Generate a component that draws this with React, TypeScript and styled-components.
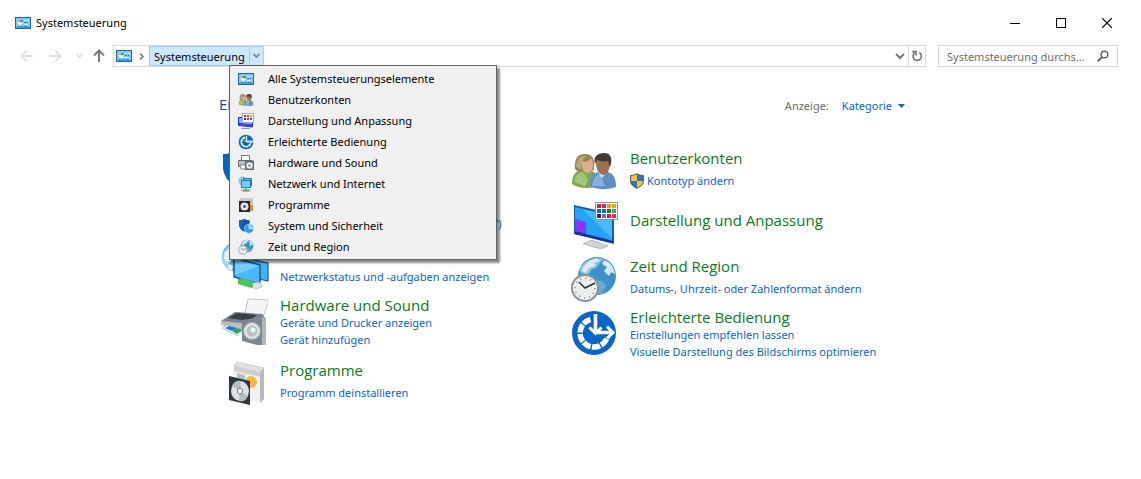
import React from "react";
import styled, { createGlobalStyle } from "styled-components";

const Global = createGlobalStyle`
  *, *::before, *::after { box-sizing: border-box; }
  body { margin: 0; background: #fff; color: #000; font: 11px/17px "Noto Sans", "Open Sans", sans-serif; }
  button, input { font: inherit; color: inherit; }
  button { border: 0; background: none; padding: 0; cursor: pointer; }
  svg { display: block; flex: none; }
`;

const palette = { link: "#0b66c3", title: "#0b7a1e", border: "#d9d9d9", muted: "#6d6d6d" };

const Frame = styled.div`display: flex; flex-direction: column; min-height: 100vh;`;

/* ---------- window chrome ---------- */
const TitleBar = styled.header`
  display: flex; align-items: center; height: 45px; padding: 1px 11px 0 15px; gap: 5px;
`;
const WindowTitle = styled.h1`margin: 0; flex: 1; font-size: 11px; line-height: 18px; font-weight: 400;`;
const WindowButton = styled.button`
  display: grid; place-items: center; width: 46px; height: 30px; margin-left: -5px;
`;
const NavRow = styled.nav`display: flex; align-items: stretch; height: 22px; padding: 0 23px 0 15px;`;
const NavButton = styled.button<{ $narrow?: boolean }>`
  display: grid; place-items: center; width: ${(p) => (p.$narrow ? 16 : 24)}px;
  &:disabled { cursor: default; }
`;
const NavButtons = styled.div`display: flex; width: 98px; gap: 4px;`;
const AddressBar = styled.div`
  display: flex; flex: 1; align-items: stretch; border: 1px solid ${palette.border}; min-width: 0;
`;
const AddressStart = styled.button`display: flex; align-items: center; gap: 5px; width: 35px; padding-left: 2px;`;
const Segment = styled.div`
  position: relative; display: flex; border: 1px solid #99d1ff; background: #cce8ff;
`;
const SegmentName = styled.button`padding: 0 4px; line-height: 17px;`;
const SegmentArrow = styled.button`
  display: grid; place-items: center; width: 14px; border-left: 1px solid #99d1ff;
`;
const Spacer = styled.div`flex: 1;`;
const BarButton = styled.button<{ $divided?: boolean }>`
  display: grid; place-items: center; width: 17px;
  border-left: ${(p) => (p.$divided ? `1px solid ${palette.border}` : "0")};
`;
const Search = styled.label`
  display: flex; align-items: center; width: 180px; margin-left: 12px; padding: 0 8px;
  border: 1px solid ${palette.border};
  input { flex: 1; min-width: 0; border: 0; padding: 0; outline: 0; background: none; }
  input::placeholder { color: ${palette.muted}; opacity: 1; }
`;

/* ---------- breadcrumb menu ---------- */
const Menu = styled.ul`
  position: absolute; z-index: 2; top: 18px; left: 79px; width: 268px; margin: 0; padding: 2px;
  list-style: none; background: #f0f0f0; border: 1px solid #606060;
  box-shadow: 3px 3px 2px rgba(0, 0, 0, 0.45);
`;
const MenuItem = styled.button`
  display: flex; align-items: center; gap: 14px; width: 100%; height: 21px; padding-left: 6px; text-align: left;
  white-space: nowrap;
`;

/* ---------- content ---------- */
const Content = styled.main`width: 100%; max-width: 703px; margin: 0 auto; padding: 28px 0 24px;`;
const Heading = styled.div`display: flex; align-items: flex-start; justify-content: space-between; padding-right: 17px; height: 20px;`;
const PageTitle = styled.h2`margin: 0; font: 400 15px/18px "Open Sans", sans-serif; color: #0a4a94;`;
const ViewBy = styled.div`display: flex; gap: 13px; color: ${palette.muted}; line-height: 22px;`;
const ViewButton = styled.button`display: flex; align-items: center; gap: 6px; color: ${palette.link};`;
const Columns = styled.div`display: grid; grid-template-columns: 350fr 353fr; margin-top: 31px;`;
const Category = styled.section`display: flex; min-height: 54px; padding-bottom: 10px; gap: 11px;`;
const CategoryIcon = styled.div`width: 50px; height: 44px; padding: 1px 0 0 1px;`;
const CategoryText = styled.div<{ $top: number }>`padding-top: ${(p) => p.$top}px; min-width: 0;`;
const CategoryTitle = styled.h3<{ $loose?: boolean }>`
  margin: 0 0 ${(p) => (p.$loose ? 5 : 0)}px; font: 400 15px/18px "Open Sans", sans-serif; white-space: nowrap;
  a { color: ${palette.title}; text-decoration: none; }
`;
const TaskLink = styled.a`
  display: flex; align-items: center; gap: 3px; color: ${palette.link}; text-decoration: none; line-height: 17px;
  white-space: pre;
`;

/* ---------- drawings ---------- */
const PanelIcon = () => (
  <svg width="16" height="16" viewBox="0 0 16 16">
    <rect x="0.5" y="2.5" width="15" height="11" fill="#7ccbf8" stroke="#1c68a6" />
    <path d="M1 12.500h14" stroke="#3f9bd8" />
    <circle cx="5.300" cy="7.300" r="2.700" fill="#f2fbff" />
    <path d="M5.300 7.300V4.600a2.700 2.700 0 0 0-2.700 2.700z" fill="#e8a53a" />
    <path d="M5.300 7.300H8A2.700 2.700 0 0 0 5.300 4.600z" fill="#2b7dc0" />
    <path d="M9 5.500h2M12 5.500h2M9 9.500h4" stroke="#e8f8ff" />
    <path d="M9 7.500h2M12 7.500h1" stroke="#2373b4" />
    <path d="M3 11.500h2M6 11.500h2M9 11.500h4" stroke="#2f86c6" />
  </svg>
);
const UsersIcon = ({ size }: { size: number }) => (
  <svg width={size} height={size} viewBox="0 0 48 48">
    <path d="M2 37c0-8 3-13 9-14h9c6 2 8 7 8 16-8 3-19 3-26-2z" fill="#83a855" />
    <path d="M4 35c1-6 4-9 9-10l5 8-3 6z" fill="#a3c676" />
    <path d="M5 22C4 11 8 7 15 7c8 0 10 6 9 16l-5 2-12-1z" fill="#968556" />
    <path d="M12 14c5 2 7 0 9-3 4 7 2 14-3 15-5 0-7-5-6-12z" fill="#d8b192" />
    <path d="M6 20C7 11 11 8 17 9c-5 2-5 7-6 14z" fill="#b9aa78" />
    <path d="M20 39c0-9 3-13 9-14h9c6 2 8 7 8 15-8 3-19 3-26-1z" fill="#5f8fc2" />
    <path d="M22 39c1-7 3-11 8-12l5 12z" fill="#86b1dc" />
    <path d="m28 25 4 6 5-6z" fill="#dfe9f2" />
    <path d="M26 16c0-6 3-8 8-8s7 4 6 10c-1 6-3 10-7 10-4-1-7-5-7-12z" fill="#9b7152" />
    <path d="M25 17c-2-7 2-11 9-11 7 0 9 6 6 14l-2-6c-4 1-8 0-11-1z" fill="#443b38" />
  </svg>
);
const swatches = ["#d3202e", "#e32065", "#f29a12", "#f5a40d", "#0873cf", "#0a76a8", "#257928", "#3bb461", "#2a20bf", "#8863bd", "#d31f60", "#e43043"];
const DisplayIcon = () => (
  <svg width="48" height="48" viewBox="0 0 48 48">
    <path d="M4 4 44 13v30L4 33z" fill="#1a57ad" />
    <path d="m5 6 37 9v25L5 31z" fill="#25a3f5" />
    <path d="m12 8 30 7v22z" fill="#48bafd" />
    <path d="m5 18 11 3v12L5 30z" fill="#8b34ff" />
    <path d="m5 30 38 10v2L5 33z" fill="#1b2f9a" />
    <path d="M20 39v4l8 4v-6z" fill="#a5b0bb" />
    <path d="m13 43 8-4 17 6-7 3z" fill="#ced5dc" stroke="#97a1ab" strokeWidth=".6" />
    <rect x="25.500" y="1.500" width="22" height="17" fill="#fff" stroke="#8f9499" />
    {swatches.map((c, i) => <rect key={i} x={27 + (i % 4) * 5} y={3 + Math.floor(i / 4) * 5} width="4" height="4" fill={c} />)}
  </svg>
);
const DisplaySmallIcon = () => (
  <svg width="16" height="16" viewBox="0 0 16 16">
    <path d="M.500 4.500h14v9.500L.500 12.500z" fill="#5ec8ff" stroke="#1e2cbb" />
    <path d="M1 10c5 0 7 1 13 1v2.500L1 12z" fill="#4a35ee" />
    <path d="M3 15.500h9" stroke="#9aa4b0" />
    <rect x="4.500" y=".5" width="11" height="9" fill="#fff" stroke="#a3a9b5" />
    {["#d3202e", "#d04b20", "#f29a12", "#243bd0", "#8a3a9b", "#257928"].map((c, i) => <rect key={i} x={6 + (i % 3) * 3} y={2 + Math.floor(i / 3) * 3} width="2" height="2" fill={c} />)}
  </svg>
);
const EaseIcon = ({ size }: { size: number }) => (
  <svg width={size} height={size} viewBox="0 0 48 48">
    <circle cx="24" cy="24" r="22" fill="#0866c6" />
    <path d="M20.500 10.500A14 14 0 1 0 37.300 28.500" fill="none" stroke="#fff" strokeWidth="5.500" strokeDasharray="8.200 1.300" />
    <path d="M25.500 5v18M27 23.500h17" stroke="#fff" strokeWidth="3.600" />
    <path d="m19.500 18.500 6 6 6-6M37 17.500l6 6-6 6" fill="none" stroke="#fff" strokeWidth="3" />
  </svg>
);
const PrinterIcon = () => (
  <svg width="48" height="48" viewBox="0 0 48 48">
    <path d="m25 16 3-14 21 1-6 17z" fill="#f4f5f6" stroke="#a5aaaf" strokeWidth=".7" />
    <path d="m1 24 14-9 27 2 4 5-15 10z" fill="#7a8087" />
    <path d="m8 21 9-5 20 2-8 6z" fill="#3a4047" />
    <path d="m1 24 29 3v8L1 28z" fill="#b9bfc5" />
    <path d="m2 31 5-3 18 5-7 6z" fill="#edf2f6" stroke="#8d949b" strokeWidth=".5" />
    <path d="m5 31 4-2 8 2-5 3z" fill="#167dda" /><path d="m12 34 5-3 6 2-6 4z" fill="#38a357" />
    <path d="m22 23 20-3 4 2v26l-5 1-19-5z" fill="#80868e" />
    <path d="m42 20 4 2v26l-4 1z" fill="#b1b6bc" />
    <circle cx="32" cy="34" r="8.500" fill="#dfe3e6" stroke="#9ca3aa" />
    <circle cx="32" cy="34" r="5.500" fill="#bbc1c7" /><circle cx="33" cy="33" r="2.500" fill="#f7f7f7" />
  </svg>
);
const PrinterSmallIcon = () => (
  <svg width="16" height="16" viewBox="0 0 16 16">
    <path d="M3.500 5V.5h8V5" fill="#fff" stroke="#777" />
    <path d="M.5 5.500h14v6H.5z" fill="#bfc2c5" stroke="#686c70" />
    <path d="M2 10h6v4H3z" fill="#f7f7f7" stroke="#888" />
    <rect x="7.500" y="6.500" width="8" height="8" fill="#8b9096" stroke="#63686d" />
    <circle cx="11.500" cy="10.500" r="3" fill="#f0f1f2" /><circle cx="11.500" cy="10.500" r="1.200" fill="#858a90" />
  </svg>
);
const Globe = () => (
  <g>
    <circle cx="27" cy="21" r="19" fill="#3d92ca" />
    <path d="M9 15C14 4 26 1 34 4c-7 5-5 9-12 10l-4 6-7-2z" fill="#88c4e4" />
    <path d="m13 12 6-6 8-3 3 3-6 2 2 3-7 2-3 5-4-2zM34 5c6 2 10 7 11 14l-4-2-2 4-5-5 3-4-5-3z" fill="#dcebf1" />
    <path d="m24 25 8 1 4 5-4 8-6-1-4-7z" fill="#69acd3" />
  </g>
);
const NetworkIcon = () => (
  <svg width="50" height="48" viewBox="0 0 50 48">
    <circle cx="17" cy="14" r="15" fill="#5aa5d2" />
    <path d="M2 16C3 7 8 2 15 1l-5 8 3 5-4 6 3 7C6 25 3 21 2 16z" fill="#a9d4ea" />
    <path d="m5 9 6-4 2 4-4 4 2 4-5 2-2-4zM9 21l4 2-1 5-4-3z" fill="#e4f1f6" />
    <path d="m26 15 22 5v18l-22-5z" fill="#42b2f5" stroke="#1d5f98" strokeWidth="1.200" />
    <path d="m14 15 26 7v19l-26-7z" fill="#4ab8fa" stroke="#154e83" strokeWidth="1.300" />
    <path d="m15 16 24 7-24 9z" fill="#74cdff" />
    <path d="m18 36 4-1 12 4v5l-3 1-13-4z" fill="#4fc25b" />
    <path d="m33 40 6-1 3 2v3l-6 2-3-1z" fill="#dde1e3" stroke="#a9afb3" strokeWidth=".5" />
  </svg>
);
const NetworkSmallIcon = () => (
  <svg width="16" height="16" viewBox="0 0 16 16">
    <circle cx="5" cy="5" r="4.500" fill="#8bc7e5" />
    <rect x="5.500" y="2.500" width="8" height="7" fill="#50bdf5" stroke="#247fb7" />
    <rect x="3.500" y="4.500" width="9" height="7" fill="#6bcfff" stroke="#247fb7" />
    <path d="M8 12v2" stroke="#8aa" strokeWidth="2" /><path d="M3 14.500h10" stroke="#b8c4c4" strokeWidth="2" /><path d="M5 14.500h6" stroke="#43b957" strokeWidth="2" />
  </svg>
);
const ProgramsIcon = () => (
  <svg width="48" height="48" viewBox="0 0 48 48">
    <path d="m14 7 3-4 27 6-3 5z" fill="#dfe1e2" stroke="#aaa" strokeWidth=".5" />
    <path d="m14 7 26 6v31l-26-5z" fill="#f0f1f2" /><path d="m40 13 4-4v31l-4 4z" fill="#b7babd" />
    <path d="m14 7 26 6v5l-26-6z" fill="#cdd0d2" />
    <circle cx="31" cy="23" r="6" fill="#f7b84b" /><path d="m17 14 8 2v10h-8z" fill="#a8c9be" />
    <path d="m9 17 21 5v24L9 41z" fill="#31363b" />
    <ellipse cx="20" cy="32" rx="9" ry="10" fill="#dfe2e4" />
    <path d="m20 32-8-5c2-5 6-6 9-5zM20 32l8 5c-2 5-6 6-9 5z" fill="#b6bbbf" />
    <ellipse cx="20" cy="32" rx="2.500" ry="3" fill="#fff" stroke="#777" />
  </svg>
);
const ProgramsSmallIcon = () => (
  <svg width="16" height="16" viewBox="0 0 16 16">
    <path d="M2 1h13v13H2z" fill="#c9caca" /><path d="M11 3h3v4h-3z" fill="#e9b15c" /><path d="M12 8h3v6h-3z" fill="#d98a3c" />
    <rect x="1" y="4" width="11" height="11" fill="#25282b" />
    <circle cx="6.500" cy="9.500" r="4" fill="#e1e3e5" /><circle cx="6.500" cy="9.500" r="1.300" fill="#30363a" />
  </svg>
);
const SecurityIcon = ({ size }: { size: number }) => (
  <svg width={size} height={size} viewBox="0 0 48 48">
    <path d="M3 7c7 0 12-1 16-5 5 4 9 5 16 5v11c0 11-6 18-16 23C9 36 3 29 3 18z" fill="#0c57a4" />
    <path d="M19 2C15 6 10 7 3 7v11c0 10 5 17 13 22z" fill="#0864bd" />
    <circle cx="33" cy="32" r="14" fill="#2c9cf0" stroke="#f0f0f0" strokeWidth="1.500" />
    <path d="M33 32V19a13 13 0 0 1 13 13z" fill="#7fcbff" />
    <path d="M33 19v13h13" fill="none" stroke="#fff" strokeWidth="2" />
  </svg>
);
const TimeIcon = ({ size }: { size: number }) => (
  <svg width={size} height={size} viewBox="0 0 48 48">
    <Globe />
    <circle cx="15" cy="33" r="13" fill="#eceeef" stroke="#8c9298" strokeWidth="2" />
    <circle cx="15" cy="33" r="10" fill="none" stroke="#8d9499" strokeDasharray="1 4.240" strokeWidth="2" />
    <path d="m9 27 6 6 10-5" fill="none" stroke="#333" strokeWidth="1.500" />
  </svg>
);
const UacShield = () => (
  <svg width="14" height="16" viewBox="0 0 14 16">
    <path d="M7 .7C5 2 3 2.500.7 2.500V8c0 3.500 2.500 5.500 6.300 7.300 3.800-1.800 6.300-3.800 6.300-7.300V2.500C11 2.500 9 2 7 .7z" fill="#2e75c4" stroke="#4e4b46" />
    <path d="M7 8h5.800c0 3.200-2.300 5-5.800 6.700zM1.200 8V3C3.500 3 5 2.500 7 1.300V8z" fill="#fbc040" />
  </svg>
);
const Chevron = ({ color, right }: { color: string; right?: boolean }) => (
  <svg width="9" height="9" viewBox="0 0 9 9" fill="none" stroke={color} strokeWidth="1.700">
    <path d={right ? "m3 1.500 3 3-3 3" : "m1.500 2 3 3 3-3"} />
  </svg>
);
const Arrow = ({ color, turn = 0 }: { color: string; turn?: number }) => (
  <svg width="14" height="14" viewBox="0 0 14 14" fill="none" stroke={color} strokeWidth={turn === 90 ? 2 : 1.500}>
    <path transform={`rotate(${turn} 7 7)`} d="M13 7H2M6.500 2 1.500 7l5 5" />
  </svg>
);

/* ---------- data ---------- */
const menuItems: [string, React.ReactNode][] = [
  ["Alle Systemsteuerungselemente", <PanelIcon />],
  ["Benutzerkonten", <UsersIcon size={16} />],
  ["Darstellung und Anpassung", <DisplaySmallIcon />],
  ["Erleichterte Bedienung", <EaseIcon size={16} />],
  ["Hardware und Sound", <PrinterSmallIcon />],
  ["Netzwerk und Internet", <NetworkSmallIcon />],
  ["Programme", <ProgramsSmallIcon />],
  ["System und Sicherheit", <SecurityIcon size={16} />],
  ["Zeit und Region", <TimeIcon size={16} />],
];
type Entry = { title: string; icon: React.ReactNode; links: string[]; shield?: boolean };
const left: Entry[] = [
  { title: "System und Sicherheit", icon: <SecurityIcon size={48} />, links: ["Status des Computers überprüfen", "Sicherungskopien von Dateien mit", "Dateiversionsverlauf speichern", "Sichern und Wiederherstellen  (Windows 7)"] },
  { title: "Netzwerk und Internet", icon: <NetworkIcon />, links: ["Netzwerkstatus und -aufgaben anzeigen"] },
  { title: "Hardware und Sound", icon: <PrinterIcon />, links: ["Geräte und Drucker anzeigen", "Gerät hinzufügen"] },
  { title: "Programme", icon: <ProgramsIcon />, links: ["Programm deinstallieren"] },
];
const right: Entry[] = [
  { title: "Benutzerkonten", icon: <UsersIcon size={48} />, links: ["Kontotyp ändern"], shield: true },
  { title: "Darstellung und Anpassung", icon: <DisplayIcon />, links: [] },
  { title: "Zeit und Region", icon: <TimeIcon size={48} />, links: ["Datums-, Uhrzeit- oder Zahlenformat ändern"] },
  { title: "Erleichterte Bedienung", icon: <EaseIcon size={48} />, links: ["Einstellungen empfehlen lassen", "Visuelle Darstellung des Bildschirms optimieren"] },
];
const topSpace = [11, 3, 0];

const CategoryList = ({ entries }: { entries: Entry[] }) => (
  <div>
    {entries.map((e) => (
      <Category key={e.title}>
        <CategoryIcon>{e.icon}</CategoryIcon>
        <CategoryText $top={topSpace[Math.min(e.links.length, 2)]}>
          <CategoryTitle $loose={e.links.length === 1}><a href="#">{e.title}</a></CategoryTitle>
          {e.links.map((l) => <TaskLink href="#" key={l}>{e.shield && <UacShield />}{l}</TaskLink>)}
        </CategoryText>
      </Category>
    ))}
  </div>
);

export default function App() {
  return (
    <Frame>
      <Global />
      <TitleBar>
        <PanelIcon />
        <WindowTitle>Systemsteuerung</WindowTitle>
        <WindowButton aria-label="Minimieren"><svg width="10" height="10"><path d="M0 5.500h10" stroke="#000" /></svg></WindowButton>
        <WindowButton aria-label="Maximieren"><svg width="10" height="10"><rect x=".5" y=".5" width="9" height="9" fill="none" stroke="#000" /></svg></WindowButton>
        <WindowButton aria-label="Schließen"><svg width="10" height="10"><path d="m0 0 10 10m0-10-10 10" stroke="#000" strokeWidth="1.200" /></svg></WindowButton>
      </TitleBar>
      <NavRow aria-label="Navigation">
        <NavButtons>
          <NavButton disabled aria-label="Zurück"><Arrow color="#d8d8d8" /></NavButton>
          <NavButton disabled aria-label="Vorwärts"><Arrow color="#d8d8d8" turn={180} /></NavButton>
          <NavButton $narrow disabled aria-label="Verlauf"><Chevron color="#dedede" /></NavButton>
          <NavButton $narrow aria-label="Nach oben"><Arrow color="#7a7a7a" turn={90} /></NavButton>
        </NavButtons>
        <AddressBar>
          <AddressStart aria-label="Start"><PanelIcon /><Chevron right color="#777" /></AddressStart>
          <Segment>
            <SegmentName>Systemsteuerung</SegmentName>
            <SegmentArrow aria-label="Untermenü" aria-expanded="true"><Chevron color="#6b8296" /></SegmentArrow>
            <Menu>
              {menuItems.map(([label, icon]) => <li key={label}><MenuItem>{icon}{label}</MenuItem></li>)}
            </Menu>
          </Segment>
          <Spacer />
          <BarButton aria-label="Vorherige Orte">
            <svg width="10" height="8" fill="none" stroke="#777" strokeWidth="2"><path d="m1 2 4 4 4-4" /></svg>
          </BarButton>
          <BarButton $divided aria-label="Aktualisieren">
            <svg width="12" height="12" viewBox="0 0 12 12" fill="none" stroke="#777" strokeWidth="1.700">
              <path d="M8.300 2.600A4.200 4.200 0 1 1 3.600 3M1.200 1.600H5v3.900" />
            </svg>
          </BarButton>
        </AddressBar>
        <Search>
          <input aria-label="Suche" placeholder="Systemsteuerung durchs..." />
          <svg width="12" height="12" viewBox="0 0 12 12" fill="none" stroke="#666">
            <circle cx="7.500" cy="4.500" r="3.300" strokeWidth="1.500" /><path d="M5 7 .8 11.200" strokeWidth="2" />
          </svg>
        </Search>
      </NavRow>
      <Content>
        <Heading>
          <PageTitle>Einstellungen des Computers anpassen</PageTitle>
          <ViewBy>
            <span>Anzeige:</span>
            <ViewButton>Kategorie <svg width="7" height="4"><path d="M0 0h7L3.500 4z" fill={palette.link} /></svg></ViewButton>
          </ViewBy>
        </Heading>
        <Columns>
          <CategoryList entries={left} />
          <CategoryList entries={right} />
        </Columns>
      </Content>
    </Frame>
  );
}
